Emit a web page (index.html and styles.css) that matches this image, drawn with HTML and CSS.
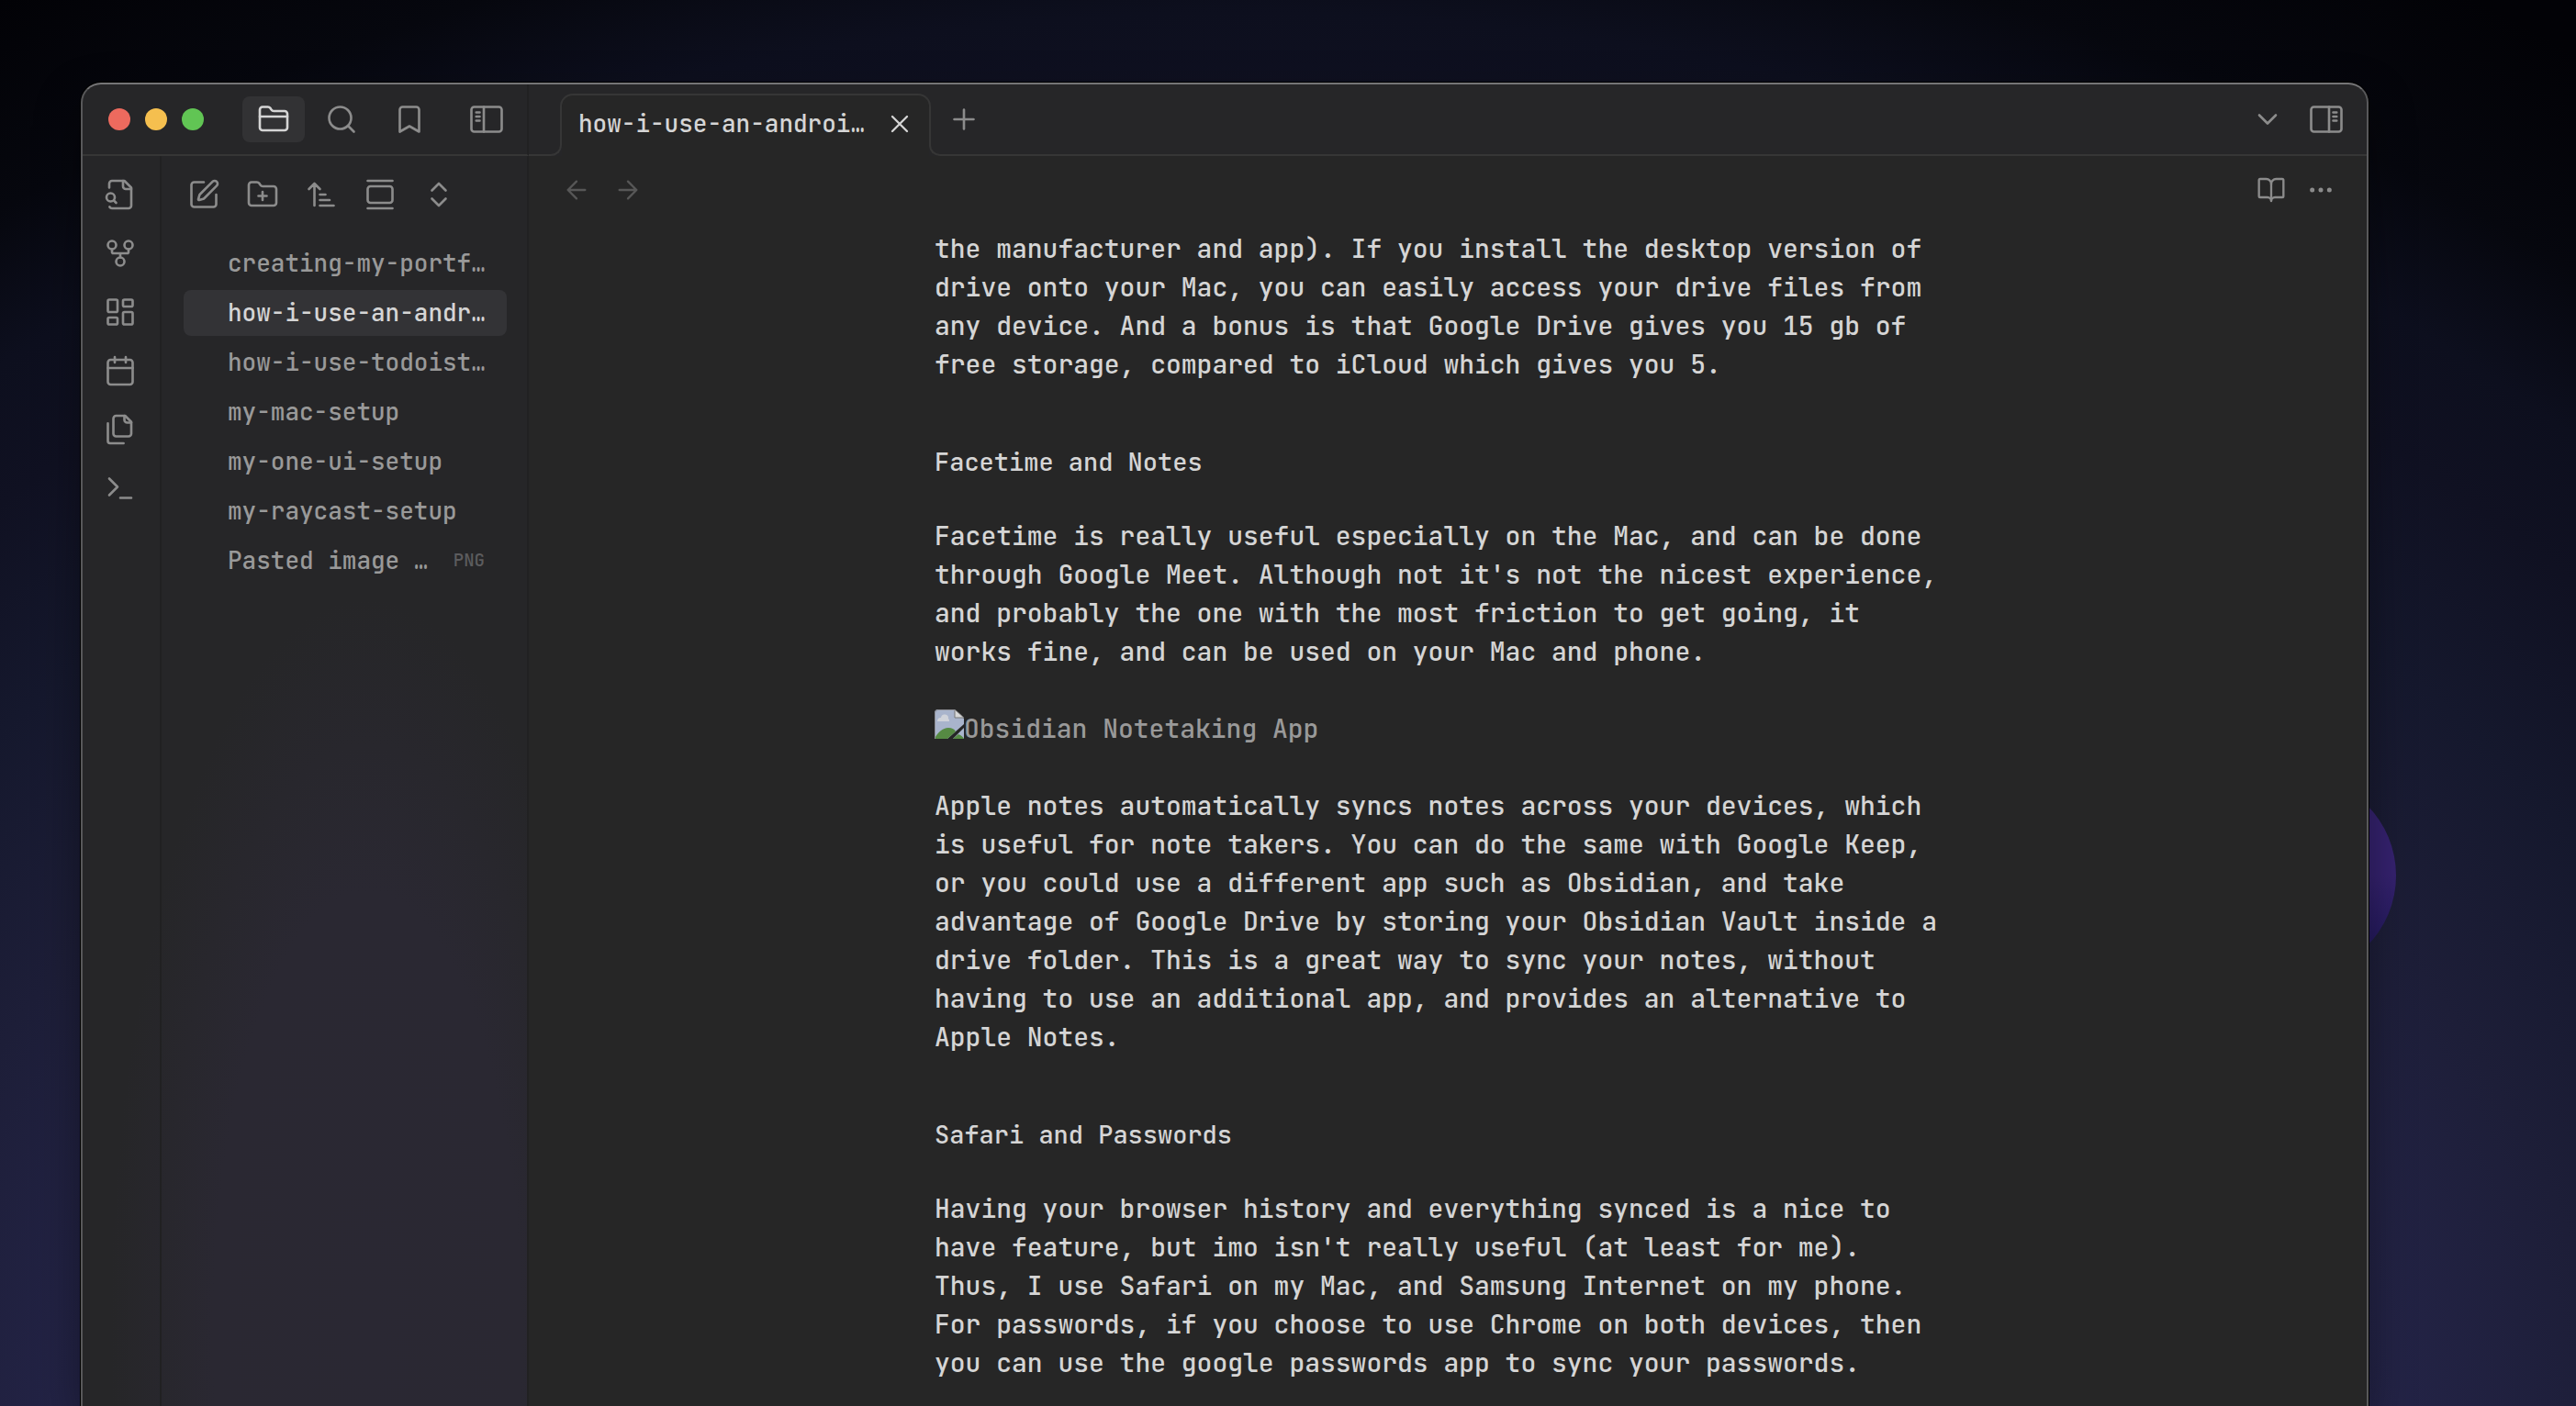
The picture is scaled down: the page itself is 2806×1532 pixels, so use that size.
FILE: index.html
```html
<!DOCTYPE html>
<html lang="en">
<head>
<meta charset="utf-8">
<title>how-i-use-an-android-phone</title>
<link rel="stylesheet" href="styles.css">
</head>
<body>
<div class="orb"></div>
<div class="window">
  <header class="titlebar">
    <div class="titlebar-left">
      <div class="lights">
        <button class="light light-close" aria-label="Close window"></button>
        <button class="light light-min" aria-label="Minimize window"></button>
        <button class="light light-max" aria-label="Zoom window"></button>
      </div>
      <nav class="panes">
        <button class="pane-btn active" aria-label="Files"><svg class="icon" viewBox="0 0 24 24"><path d="M20 20a2 2 0 0 0 2-2V8a2 2 0 0 0-2-2h-7.9a2 2 0 0 1-1.69-.9L9.6 3.900A2 2 0 0 0 7.930 3H4a2 2 0 0 0-2 2v13a2 2 0 0 0 2 2Z"/><path d="M2 10h20"/></svg></button>
        <button class="pane-btn" aria-label="Search"><svg class="icon" viewBox="0 0 24 24"><circle cx="11" cy="11" r="8"/><path d="m21 21-4.300-4.300"/></svg></button>
        <button class="pane-btn" aria-label="Bookmarks"><svg class="icon" viewBox="0 0 24 24"><path d="m19 21-7-4-7 4V5a2 2 0 0 1 2-2h10a2 2 0 0 1 2 2v16z"/></svg></button>
      </nav>
      <button class="icon-btn toggle" aria-label="Collapse left sidebar"><svg class="icon" viewBox="0 0 24 24"><rect x="1" y="3" width="22" height="18" rx="2"/><path d="M10 3v18M4.500 7h2.500M4.500 10h2.500M4.500 13h2.500"/></svg></button>
    </div>
    <div class="tabbar">
      <div class="tab">
        <span class="foot foot-left"></span>
        <span class="foot foot-right"></span>
        <span class="tab-title">how-i-use-an-androi…</span>
        <button class="icon-btn bright" aria-label="Close tab"><svg class="icon small" viewBox="0 0 24 24"><path d="M18 6 6 18M6 6l12 12"/></svg></button>
      </div>
      <button class="icon-btn new-tab" aria-label="New tab"><svg class="icon" viewBox="0 0 24 24"><path d="M5 12h14M12 5v14"/></svg></button>
      <div class="tabbar-end">
        <button class="icon-btn" aria-label="Tab list"><svg class="icon" viewBox="0 0 24 24"><path d="m6 9 6 6 6-6"/></svg></button>
        <button class="icon-btn" aria-label="Expand right sidebar"><svg class="icon" viewBox="0 0 24 24"><rect x="1" y="3" width="22" height="18" rx="2"/><path d="M14 3v18M17 7h2.500M17 10h2.500M17 13h2.500"/></svg></button>
      </div>
    </div>
  </header>
  <div class="workspace">
    <nav class="ribbon">
      <button class="icon-btn" aria-label="Quick switcher"><svg class="icon" viewBox="0 0 24 24"><path d="M14 2v4a2 2 0 0 0 2 2h4"/><path d="M4.268 21a2 2 0 0 0 1.727 1H18a2 2 0 0 0 2-2V7l-5-5H6a2 2 0 0 0-2 2v3"/><path d="m9 18-1.500-1.500"/><circle cx="5" cy="14" r="3"/></svg></button>
      <button class="icon-btn" aria-label="Graph view"><svg class="icon" viewBox="0 0 24 24"><circle cx="12" cy="18" r="3"/><circle cx="6" cy="6" r="3"/><circle cx="18" cy="6" r="3"/><path d="M18 9v2a1 1 0 0 1-1 1H7a1 1 0 0 1-1-1V9M12 12v3"/></svg></button>
      <button class="icon-btn" aria-label="Canvas"><svg class="icon" viewBox="0 0 24 24"><rect x="3" y="3" width="7" height="9" rx="1"/><rect x="14" y="3" width="7" height="5" rx="1"/><rect x="14" y="12" width="7" height="9" rx="1"/><rect x="3" y="16" width="7" height="5" rx="1"/></svg></button>
      <button class="icon-btn" aria-label="Daily note"><svg class="icon" viewBox="0 0 24 24"><path d="M8 2v4M16 2v4M3 10h18"/><rect x="3" y="4" width="18" height="18" rx="2"/></svg></button>
      <button class="icon-btn" aria-label="Templates"><svg class="icon" viewBox="0 0 24 24"><path d="M15.500 2H9a2 2 0 0 0-2 2v11a2 2 0 0 0 2 2h9a2 2 0 0 0 2-2V6.500L15.500 2z"/><path d="M15 2v3a2 2 0 0 0 2 2h3M3 7.600v12.800A1.600 1.600 0 0 0 4.600 22h9.800"/></svg></button>
      <button class="icon-btn" aria-label="Command palette"><svg class="icon" viewBox="0 0 24 24"><path d="m4 17 6-6-6-6M12 19h8"/></svg></button>
    </nav>
    <aside class="sidebar">
      <div class="actions">
        <button class="icon-btn" aria-label="New note"><svg class="icon" viewBox="0 0 24 24"><path d="M12 3H5a2 2 0 0 0-2 2v14a2 2 0 0 0 2 2h14a2 2 0 0 0 2-2v-7"/><path d="M18.375 2.625a1 1 0 0 1 3 3l-9.013 9.014a2 2 0 0 1-.853.505l-2.873.840a.5.5 0 0 1-.620-.620l.840-2.873a2 2 0 0 1 .506-.852z"/></svg></button>
        <button class="icon-btn" aria-label="New folder"><svg class="icon" viewBox="0 0 24 24"><path d="M12 10v6M9 13h6"/><path d="M20 20a2 2 0 0 0 2-2V8a2 2 0 0 0-2-2h-7.900a2 2 0 0 1-1.690-.900L9.600 3.900A2 2 0 0 0 7.930 3H4a2 2 0 0 0-2 2v13a2 2 0 0 0 2 2Z"/></svg></button>
        <button class="icon-btn" aria-label="Change sort order"><svg class="icon" viewBox="0 0 24 24"><path d="m3 8 4-4 4 4M7 4v16M11 12h4M11 16h7M11 20h10"/></svg></button>
        <button class="icon-btn" aria-label="Auto-reveal current file"><svg class="icon" viewBox="0 0 24 24"><path d="M3 2h18M3 22h18"/><rect x="3" y="6" width="18" height="12" rx="2"/></svg></button>
        <button class="icon-btn" aria-label="Expand all"><svg class="icon" viewBox="0 0 24 24"><path d="m7 15 5 5 5-5M7 9l5-5 5 5"/></svg></button>
      </div>
      <ul class="files">
        <li><a class="file" href="#"><span class="name">creating-my-portf…</span></a></li>
        <li><a class="file active" href="#"><span class="name">how-i-use-an-andr…</span></a></li>
        <li><a class="file" href="#"><span class="name">how-i-use-todoist…</span></a></li>
        <li><a class="file" href="#"><span class="name">my-mac-setup</span></a></li>
        <li><a class="file" href="#"><span class="name">my-one-ui-setup</span></a></li>
        <li><a class="file" href="#"><span class="name">my-raycast-setup</span></a></li>
        <li><a class="file" href="#"><span class="name">Pasted image …</span><span class="tag">PNG</span></a></li>
      </ul>
    </aside>
    <main class="view">
      <div class="view-header">
        <button class="icon-btn dim" aria-label="Back"><svg class="icon small" viewBox="0 0 24 24"><path d="m12 19-7-7 7-7M19 12H5"/></svg></button>
        <button class="icon-btn dim" aria-label="Forward"><svg class="icon small" viewBox="0 0 24 24"><path d="M5 12h14M12 5l7 7-7 7"/></svg></button>
        <div class="view-actions">
          <button class="icon-btn" aria-label="Reading view"><svg class="icon small" viewBox="0 0 24 24"><path d="M12 7v14"/><path d="M3 18a1 1 0 0 1-1-1V4a1 1 0 0 1 1-1h5a4 4 0 0 1 4 4 4 4 0 0 1 4-4h5a1 1 0 0 1 1 1v13a1 1 0 0 1-1 1h-6a3 3 0 0 0-3 3 3 3 0 0 0-3-3z"/></svg></button>
          <button class="icon-btn" aria-label="More options"><svg class="icon small" viewBox="0 0 24 24"><circle cx="5" cy="12" r="1"/><circle cx="12" cy="12" r="1"/><circle cx="19" cy="12" r="1"/></svg></button>
        </div>
      </div>
      <div class="scroller">
        <article class="note">
          <p>the manufacturer and app). If you install the desktop version of drive onto your Mac, you can easily access your drive files from any device. And a bonus is that Google Drive gives you 15 gb of free storage, compared to iCloud which gives you 5.</p>
          <h2>Facetime and Notes</h2>
          <p>Facetime is really useful especially on the Mac, and can be done through Google Meet. Although not it's not the nicest experience, and probably the one with the most friction to get going, it works fine, and can be used on your Mac and phone.</p>
          <p class="missing"><svg class="broken" viewBox="0 0 32 32"><path fill="#a9b4cc" d="M4 0h18l10 10v6L14 32H0V4a4 4 0 0 1 4-4z"/><path fill="#d0d3da" d="M3 13a4 4 0 0 1 4-4 4 4 0 0 1 8 1 3 3 0 0 1 1 3z"/><path fill="#568a43" d="M0 32c3-7 9-12 15-12 4 0 6 1 8 4l-9 8z"/><path fill="#a9b4cc" d="M32 20v12H20z"/><path fill="#568a43" d="m20 32 6-5c3 1 5 3 6 5z"/><path fill="#d8d8d8" stroke="#777" d="M22 0v9h10z"/><path fill="none" stroke="#8d8f96" d="M.500 32V4A3.500 3.500 0 0 1 4 .500h18"/></svg>Obsidian Notetaking App</p>
          <p>Apple notes automatically syncs notes across your devices, which is useful for note takers. You can do the same with Google Keep, or you could use a different app such as Obsidian, and take advantage of Google Drive by storing your Obsidian Vault inside a drive folder. This is a great way to sync your notes, without having to use an additional app, and provides an alternative to Apple Notes.</p>
          <h2>Safari and Passwords</h2>
          <p>Having your browser history and everything synced is a nice to have feature, but imo isn't really useful (at least for me). Thus, I use Safari on my Mac, and Samsung Internet on my phone. For passwords, if you choose to use Chrome on both devices, then you can use the google passwords app to sync your passwords.</p>
        </article>
      </div>
    </main>
  </div>
</div>
</body>
</html>
```
FILE: styles.css
```css
:root {
  --bg: #262626;
  --line: #363636;
  --divider: #212122;
  --text: #d5d5d5;
  --muted: #999;
  --icon: #8c8c8c;
}

* { box-sizing: border-box; }

body {
  margin: 0;
  height: 100vh;
  overflow: hidden;
  display: flex;
  padding: 90px 226px 0 88px;
  font-family: "JetBrains Mono", "DejaVu Sans Mono", monospace;
  font-size: 28px;
  font-weight: 500;
  line-height: 42px;
  color: var(--text);
  background:
    radial-gradient(ellipse 2400px 1900px at 48% 110%,
      #242448 52%, #1d1e38 63%, #15182d 73%, #101122 82%, #0d0f1e 88%, #06070e 95%, #020206 105%);
}

button {
  border: 0;
  padding: 0;
  background: none;
  color: inherit;
  font: inherit;
}

.orb {
  position: absolute;
  top: 845px;
  right: 196px;
  width: 218px;
  height: 218px;
  border-radius: 50%;
  background: linear-gradient(#35226f, #35226f 50%, #241a5e 85%);
}

.window {
  position: relative;
  flex: 1;
  display: flex;
  flex-direction: column;
  min-width: 0;
  border: 2px solid #58585a;
  border-top-color: #757577;
  border-bottom: 0;
  border-radius: 22px 22px 0 0;
  overflow: hidden;
  background:
    radial-gradient(ellipse 280px 800px at 310px 1360px, #2a2833 0, #2a2832 60%, transparent),
    #262628;
  box-shadow: 0 0 0 1px #000, 0 20px 50px #0006;
}

.icon {
  display: block;
  width: 36px;
  height: 36px;
  fill: none;
  stroke: currentColor;
  stroke-width: 1.750;
  stroke-linecap: round;
  stroke-linejoin: round;
}

.icon.small { width: 32px; height: 32px; }

.icon-btn { color: var(--icon); }
.icon-btn.bright { color: var(--text); }
.icon-btn.dim { color: #575757; }

.titlebar {
  display: flex;
  height: 78px;
}

.titlebar-left {
  display: flex;
  align-items: center;
  width: 486px;
  padding: 0 26px 0 28px;
  border-right: 2px solid var(--divider);
  border-bottom: 2px solid var(--line);
}

.lights { display: flex; gap: 16px; }

.light {
  width: 24px;
  height: 24px;
  border-radius: 50%;
}

.light-close { background: #ed6a5e; }
.light-min { background: #f5bf4f; }
.light-max { background: #61c554; }

.panes {
  display: flex;
  gap: 6px;
  margin-left: 42px;
}

.pane-btn {
  display: flex;
  align-items: center;
  justify-content: center;
  width: 68px;
  height: 50px;
  border-radius: 8px;
  color: var(--icon);
}

.pane-btn.active {
  background: #323234;
  color: var(--text);
}

.toggle { margin-left: auto; }

.tabbar {
  flex: 1;
  display: flex;
  align-items: flex-end;
}

.tabbar::before {
  content: "";
  width: 24px;
  height: 2px;
  background: var(--line);
}

.tab {
  position: relative;
  display: flex;
  align-items: center;
  justify-content: space-between;
  width: 424px;
  height: 68px;
  padding: 0 28px 2px 30px;
  font-size: 26px;
}

/* Tab outline: rounded top, feet that flare into the bar's bottom line */
.tab::before {
  content: "";
  position: absolute;
  inset: 0 10px 12px;
  border: 2px solid var(--line);
  border-bottom: 0;
  border-radius: 14px 14px 0 0;
  background: var(--bg);
}

.tab::after {
  content: "";
  position: absolute;
  inset: auto 12px 0;
  height: 12px;
  background: var(--bg);
}

.foot {
  position: absolute;
  bottom: 0;
  width: 12px;
  height: 12px;
  border: 0 solid var(--line);
  border-bottom-width: 2px;
}

.foot-left {
  left: 0;
  border-right-width: 2px;
  border-bottom-right-radius: 12px;
}

.foot-right {
  right: 0;
  border-left-width: 2px;
  border-bottom-left-radius: 12px;
}

.tab-title,
.tab .icon-btn { position: relative; }

.tab-title { white-space: nowrap; }

.new-tab,
.tabbar-end {
  height: 78px;
  border-bottom: 2px solid var(--line);
}

.new-tab { padding: 0 8px; }

.tabbar-end {
  flex: 1;
  display: flex;
  align-items: center;
  justify-content: flex-end;
  gap: 28px;
  padding-right: 26px;
}

.workspace {
  flex: 1;
  display: flex;
  min-height: 0;
}

.ribbon {
  display: flex;
  flex-direction: column;
  align-items: center;
  gap: 28px;
  width: 86px;
  padding: 24px 2px 0 0;
  border-right: 2px solid var(--divider);
}

.sidebar {
  width: 400px;
  border-right: 2px solid var(--divider);
}

.actions {
  display: flex;
  gap: 28px;
  padding: 24px 28px 0;
}

.files {
  list-style: none;
  display: flex;
  flex-direction: column;
  gap: 4px;
  margin: 0;
  padding: 32px 22px 0 24px;
}

.file {
  display: flex;
  align-items: center;
  justify-content: space-between;
  height: 50px;
  padding: 0 24px 0 48px;
  border-radius: 8px;
  color: var(--muted);
  font-size: 26px;
  text-decoration: none;
  white-space: nowrap;
}

.file.active {
  background: #333336;
  color: var(--text);
}

.tag { font-size: 19px; color: #5c5c5e; }

.view {
  flex: 1;
  min-width: 0;
  display: flex;
  flex-direction: column;
  background: var(--bg);
}

.view-header {
  display: flex;
  align-items: center;
  gap: 24px;
  height: 74px;
  padding: 0 34px 0 36px;
}

.view-actions {
  display: flex;
  gap: 22px;
  margin-left: auto;
}

.scroller {
  flex: 1;
  min-height: 0;
  overflow: hidden;
  padding: 6px 14px 0 0;
}

.note {
  max-width: 1104px;
  margin: 0 auto;
}

.note p { margin: 0 0 42px; }

.note h2 {
  margin: 64px 0 39px;
  font-size: 27px;
  font-weight: 500;
}

.note .missing {
  display: flex;
  align-items: flex-start;
  color: var(--muted);
}

.broken { width: 32px; height: 32px; }
```
